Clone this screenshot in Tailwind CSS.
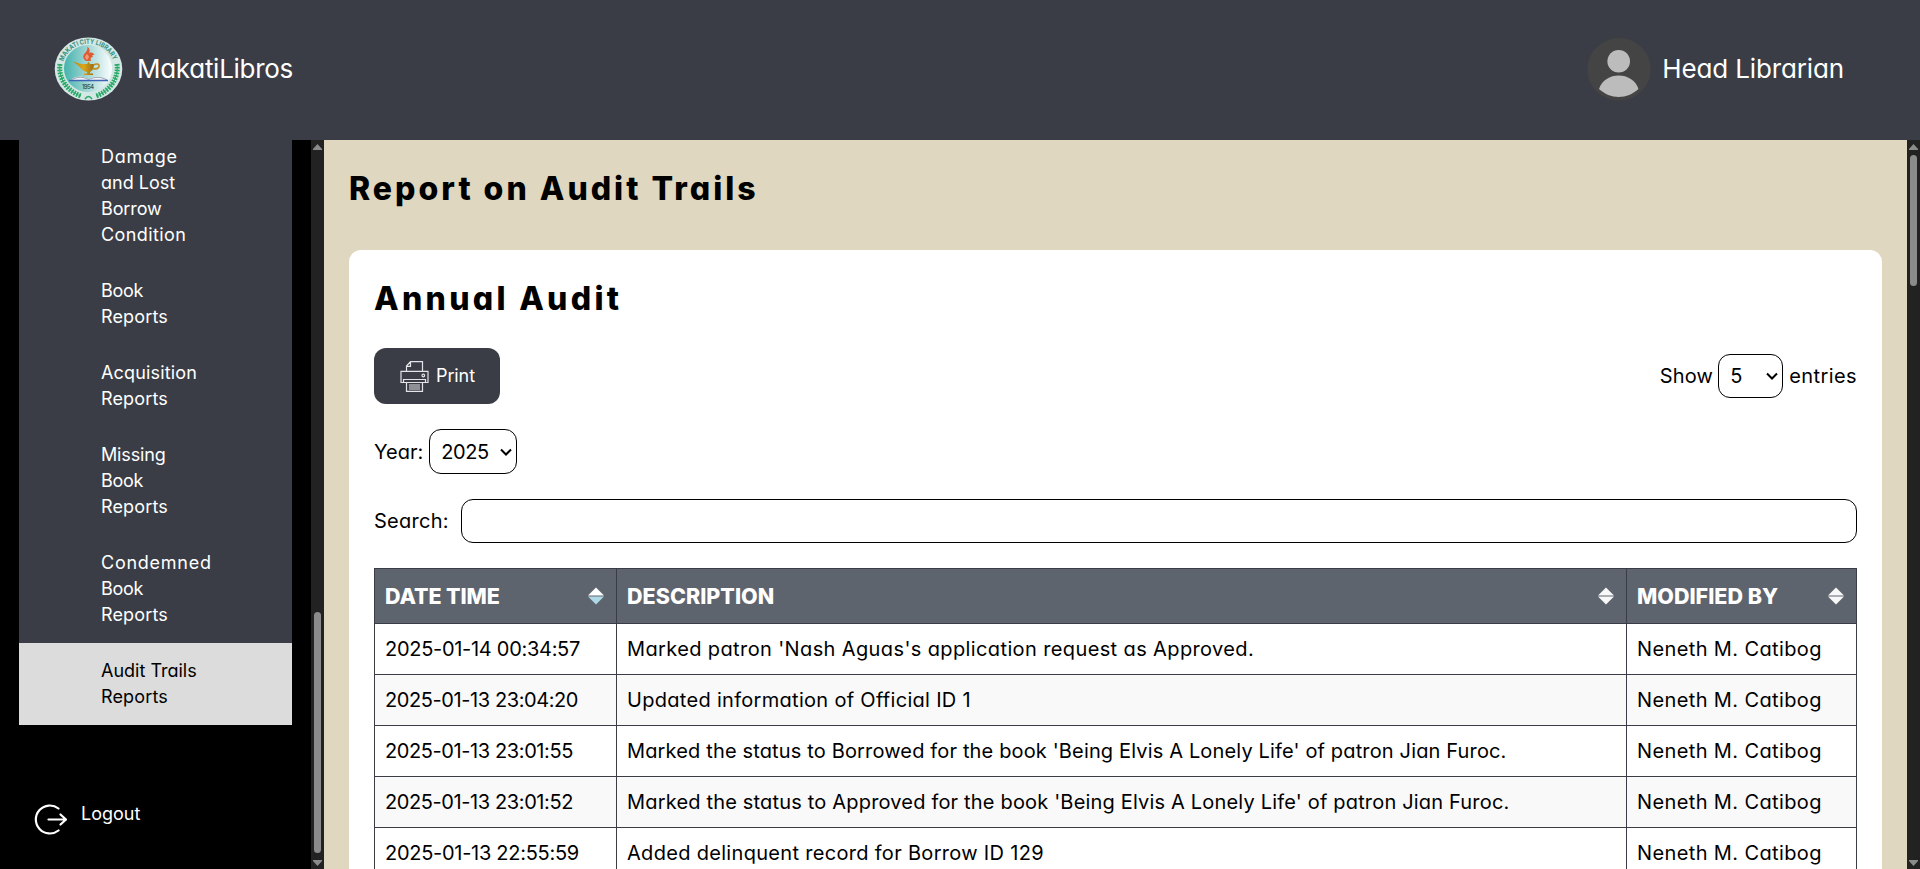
<!DOCTYPE html>
<html lang="en">
<head>
<meta charset="utf-8">
<title>MakatiLibros</title>
<script src="https://cdn.jsdelivr.net/npm/@tailwindcss/browser@4"></script>
</head>
<body class="flex h-[869px] w-[1920px] flex-col overflow-hidden bg-[#dfd7bf] font-[family-name:Inter,sans-serif] text-black [font-feature-settings:'cv11']">

<header class="flex h-[140px] shrink-0 items-center justify-between bg-[#3a3d46] pl-[54px] pr-[76px] pb-[3px] text-[26px] text-white">
  <div class="flex items-center gap-[14px]">
    <svg class="h-[64px] w-[69px]" viewBox="0 0 69 64">
      <defs>
        <linearGradient id="sea" x1="0" x2="1"><stop offset="0" stop-color="#45b3ad"/><stop offset=".45" stop-color="#9ad3d2"/><stop offset="1" stop-color="#fbfefe"/></linearGradient>
        <linearGradient id="gold" x1="0" x2="1"><stop offset="0" stop-color="#b8860f"/><stop offset=".5" stop-color="#dca51c"/><stop offset="1" stop-color="#9c6c12"/></linearGradient>
        <path id="arc" d="M9.500 24.500A26 24.500 0 0 1 59.500 24.500"/>
      </defs>
      <ellipse cx="34.500" cy="32" rx="33.800" ry="31.600" fill="#d3e7e4"/>
      <ellipse cx="34" cy="31.500" rx="24" ry="23.500" fill="url(#sea)"/>
      <text font-size="6.800" font-weight="700" fill="#35907f"><textPath href="#arc" textLength="64" lengthAdjust="spacingAndGlyphs">MAKATI CITY LIBRARY</textPath></text>
      <g fill="none" stroke="#28a866">
        <path d="M6 27C4 41 13 54 27 59" stroke-width="5" stroke-dasharray="1.700 1.100"/>
        <path d="M63 27C65 41 56 54 42 59" stroke-width="5" stroke-dasharray="1.700 1.100"/>
        <path d="M6 27C4 41 13 54 27 59M63 27C65 41 56 54 42 59" stroke-width="1"/>
        <path d="M31 62q3.500-5 7 0" stroke-width="1.500"/>
      </g>
      <path d="M32 24c-5-4-2-7 0-9 1-2 2-3 1-5 3 1 3 4 2 6 3-1 4 0 6 2-3-1-3 1-2 2-2 0-3 1-2 4z" fill="#dc5a34"/>
      <path d="M33 17c-3 3-2 4 0 6 3-3 2-4 0-6z" fill="#f39a74"/>
      <path d="M19 25c4 0 6 2 9 2h5l1.500-2.500L36 27h4c0 5-2 7-4 8v1.500h3V38h-9v-1.500h3V35c-6-1-7-7-14-10z" fill="url(#gold)"/>
      <path d="M39.500 28c3-2 6-1 5.500 1.500S42 32 38.500 32" fill="none" stroke="#c08d22" stroke-width="1.500"/>
      <path d="M16 43c7-5 14-4 18.500-1 4.500-3 11-4 19 1z" fill="#f4f5f8"/>
      <path d="M17 43c7-4 13-3 17.500-.5M53 43c-7-4-13-3-18.500-.5" fill="none" stroke="#737f91" stroke-width=".7"/>
      <path d="M15 43.500h39" stroke="#3e63b5" stroke-width="1.500"/>
      <text x="34" y="51.500" text-anchor="middle" font-size="6" font-weight="600" fill="#355e5c" textLength="12">1954</text>
    </svg>
    <span class="tracking-[-0.28px]">MakatiLibros</span>
  </div>
  <div class="flex items-center gap-[11px]">
    <svg class="mt-0.5 h-[63px] w-[64px]" viewBox="0 0 64 63">
      <ellipse cx="32" cy="31.300" rx="31.700" ry="31.300" fill="#444"/>
      <circle cx="31.700" cy="23.200" r="11.300" fill="#bcbcbc"/>
      <path d="M12 51C15 42 23 37.500 31.700 37.500S48.500 42 51.500 51C46 56 39 59 31.700 59S17.500 56 12 51z" fill="#bcbcbc"/>
    </svg>
    <span class="tracking-[-0.13px]">Head Librarian</span>
  </div>
</header>

<div class="flex min-h-0 flex-1">
  <aside class="flex w-[324px] shrink-0 bg-black text-lg leading-[26px] text-white">
    <div class="flex w-[311px] flex-col px-[19px]">
      <nav class="flex w-[273px] flex-col bg-[#3a3d46]">
        <a class="pt-1 pb-[15px] pl-[82px]"><span class="tracking-[0.75px]">Damage</span><br><span>and Lost</span><br><span class="tracking-[-0.1px]">Borrow</span><br><span class="tracking-[0.4px]">Condition</span></a>
        <a class="py-[15px] pl-[82px]"><span class="tracking-[-0.3px]">Book</span><br><span class="tracking-[0.15px]">Reports</span></a>
        <a class="py-[15px] pl-[82px]"><span class="tracking-[0.16px]">Acquisition</span><br><span class="tracking-[0.15px]">Reports</span></a>
        <a class="py-[15px] pl-[82px]"><span class="tracking-[-0.15px]">Missing</span><br><span class="tracking-[-0.3px]">Book</span><br><span class="tracking-[0.15px]">Reports</span></a>
        <a class="py-[15px] pl-[82px]"><span class="tracking-[0.75px]">Condemned</span><br><span class="tracking-[-0.3px]">Book</span><br><span class="tracking-[0.15px]">Reports</span></a>
        <a class="bg-[#dcdcdc] py-[15px] pl-[82px] text-black">Audit Trails<br><span class="tracking-[0.15px]">Reports</span></a>
      </nav>
      <a class="mt-[76px] flex gap-[14px] pl-[15px]">
        <svg class="mt-[2px] h-[33px] w-[33px]" viewBox="0 0 33 33" fill="none" stroke="#fff" stroke-width="2.200" stroke-linecap="round" stroke-linejoin="round"><path d="M24.500 5.500A14 14 0 1 0 24.500 27.500M14.500 16.500H32M26.500 11.500l5.500 5-5.500 5"/></svg>
        <span>Logout</span>
      </a>
    </div>
    <div class="flex w-[13px] flex-col items-center bg-[#222]">
      <svg class="mt-1 h-1.5 w-[9px]" viewBox="0 0 9 6"><path d="M4.500 0 9 5v1H0V5z" fill="#8b8b8b"/></svg>
      <div class="mt-auto h-[241px] w-[7px] rounded-full bg-[#8b8b8b]"></div>
      <svg class="mt-[7px] mb-[3px] h-1.5 w-[9px]" viewBox="0 0 9 6"><path d="M4.500 6 9 1V0H0v1z" fill="#8b8b8b"/></svg>
    </div>
  </aside>

  <main class="min-w-0 flex-1 overflow-hidden px-[25px] text-xl">
    <h1 class="flex h-[110px] items-start pt-[25px] text-[32px] leading-[48px] font-extrabold tracking-[3px]">Report on Audit Trails</h1>
    <section class="h-[700px] rounded-t-xl bg-white px-[25px] pt-[25px]">
      <h2 class="text-[32px] leading-[48px] font-extrabold tracking-[3.3px]">Annual Audit</h2>
      <div class="mt-[25px] flex h-14 items-center justify-between">
        <button class="flex h-14 w-[126px] items-center gap-[7px] rounded-xl bg-[#3a3d46] pl-[26px] text-lg text-white">
          <svg class="h-[31px] w-[29px]" viewBox="0 0 29 31" fill="none" stroke="#e4e4e8" stroke-width="1.200">
            <path d="M6.500 10V5L10.500.7h12V10M6.500 5.300h4V.7M6.500 21.500H1V10.300h27v11.200h-5.500M3.500 21V18.500h22V21M6.500 21.500v8.800h16v-8.800zM9 24h11M9 26h11M9 28h11"/>
            <circle cx="23.300" cy="14.500" r="1.300"/>
          </svg>
          <span class="tracking-[-0.1px]">Print</span>
        </button>
        <div class="flex items-center">
          <span class="tracking-[0.2px]">Show</span>
          <div class="ml-[5px] flex h-[44px] w-[65px] items-center justify-between rounded-xl border border-black pl-[11px] pr-[4px]">5
            <svg class="h-2 w-3" viewBox="0 0 12 8" fill="none" stroke="#000" stroke-width="2"><path d="M1 1.500l5 5 5-5"/></svg>
          </div>
          <span class="ml-[6px] tracking-[0.42px]">entries</span>
        </div>
      </div>
      <div class="mt-[25px] flex h-[45px] items-center">
        <span>Year:</span>
        <div class="ml-[6px] flex h-[45px] w-[88px] items-center justify-between rounded-xl border border-black pl-[11px] pr-[4px]"><span class="tracking-[-0.4px]">2025</span>
          <svg class="h-2 w-3" viewBox="0 0 12 8" fill="none" stroke="#000" stroke-width="2"><path d="M1 1.500l5 5 5-5"/></svg>
        </div>
      </div>
      <div class="mt-[25px] flex h-[44px] items-center">
        <span class="w-[87px] tracking-[0.28px]">Search:</span>
        <div class="h-[44px] flex-1 rounded-xl border border-black"></div>
      </div>
      <table class="mt-[25px] w-[1482px] table-fixed border-collapse text-left [&_td]:border [&_td]:border-[#3a3d46] [&_td]:pl-[10px] [&_th]:border [&_th]:border-[#3a3d46] [&_th]:pl-[10px]">
        <colgroup><col class="w-[242px]"><col class="w-[1010px]"><col class="w-[230px]"></colgroup>
        <thead>
          <tr class="h-[55px] bg-[#5e646e] text-[21.500px] text-white">
            <th class="font-extrabold"><div class="flex items-center justify-between pr-3"><span class="tracking-[-0.1px]">DATE TIME</span><svg class="h-[18px] w-4" viewBox="0 0 16 18"><path d="M8 .5 16 8.500H0z" fill="#fff"/><path d="M0 9.500h16l-8 8z" fill="#add8e6"/></svg></div></th>
            <th class="font-extrabold"><div class="flex items-center justify-between pr-3"><span class="tracking-[0.02px]">DESCRIPTION</span><svg class="h-[18px] w-4" viewBox="0 0 16 18"><path d="M8 .5 16 8.500H0zM0 9.500h16l-8 8z" fill="#f8f8f8"/></svg></div></th>
            <th class="font-extrabold"><div class="flex items-center justify-between pr-3"><span class="tracking-[0px]">MODIFIED BY</span><svg class="h-[18px] w-4" viewBox="0 0 16 18"><path d="M8 .5 16 8.500H0zM0 9.500h16l-8 8z" fill="#f8f8f8"/></svg></div></th>
          </tr>
        </thead>
        <tbody>
          <tr class="h-[51px]"><td class="tracking-[-0.29px]">2025-01-14 00:34:57</td><td class="tracking-[0.38px]">Marked patron 'Nash Aguas's application request as Approved.</td><td class="tracking-[0.38px]">Neneth M. Catibog</td></tr>
          <tr class="h-[51px] bg-[#f9f9f9]"><td class="tracking-[-0.41px]">2025-01-13 23:04:20</td><td class="tracking-[0.3px]">Updated information of Official ID 1</td><td class="tracking-[0.38px]">Neneth M. Catibog</td></tr>
          <tr class="h-[51px]"><td class="tracking-[-0.4px]">2025-01-13 23:01:55</td><td class="tracking-[0.15px]">Marked the status to Borrowed for the book 'Being Elvis A Lonely Life' of patron Jian Furoc.</td><td class="tracking-[0.38px]">Neneth M. Catibog</td></tr>
          <tr class="h-[51px] bg-[#f9f9f9]"><td class="tracking-[-0.4px]">2025-01-13 23:01:52</td><td class="tracking-[0.18px]">Marked the status to Approved for the book 'Being Elvis A Lonely Life' of patron Jian Furoc.</td><td class="tracking-[0.38px]">Neneth M. Catibog</td></tr>
          <tr class="h-[51px]"><td class="tracking-[-0.28px]">2025-01-13 22:55:59</td><td class="tracking-[0.31px]">Added delinquent record for Borrow ID 129</td><td class="tracking-[0.38px]">Neneth M. Catibog</td></tr>
        </tbody>
      </table>
    </section>
  </main>

  <div class="flex w-[13px] shrink-0 flex-col items-center bg-[#222]">
    <svg class="mt-1 h-1.5 w-[9px]" viewBox="0 0 9 6"><path d="M4.500 0 9 5v1H0V5z" fill="#8b8b8b"/></svg>
    <div class="mt-[5px] h-[131px] w-[7px] rounded-full bg-[#8b8b8b]"></div>
    <svg class="mt-auto mb-[3px] h-1.5 w-[9px]" viewBox="0 0 9 6"><path d="M4.500 6 9 1V0H0v1z" fill="#8b8b8b"/></svg>
  </div>
</div>
</body>
</html>
